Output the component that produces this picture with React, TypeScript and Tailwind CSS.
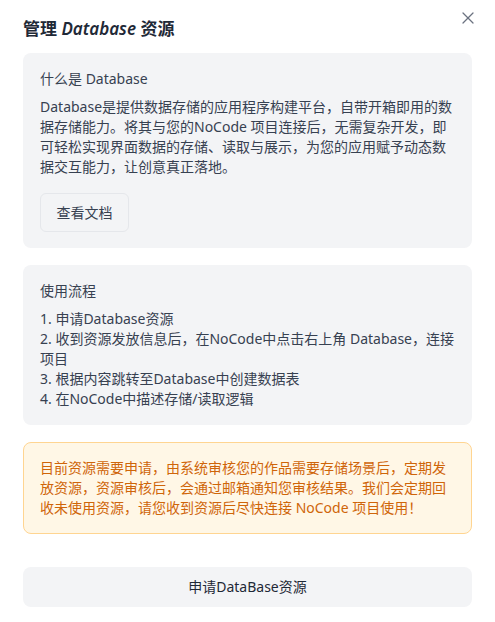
import { X } from 'lucide-react'

const steps = [
  '1. 申请Database资源',
  '2. 收到资源发放信息后，在NoCode中点击右上角 Database，连接项目',
  '3. 根据内容跳转至Database中创建数据表',
  '4. 在NoCode中描述存储/读取逻辑',
]

export default function App() {
  return (
    <div
      className="relative h-[622px] w-[495px] bg-white px-[23px] pt-[18px] text-[#374151]"
      style={{ fontFamily: '"Noto Sans", "Noto Sans CJK SC", sans-serif' }}
    >
      <button type="button" className="absolute right-[17px] top-[8px] text-[#6b7280]">
        <X size={20} strokeWidth={1.5} />
      </button>

      <h2 className="text-[17px] font-semibold leading-[22px] text-[#1f2937]">
        管理 <span className="italic">Database</span> 资源
      </h2>

      <section className="mt-[13px] rounded-lg bg-[#f3f4f6] py-4 pl-[17px] pr-[18px]">
        <div className="text-sm leading-5">什么是 Database</div>
        <p className="mt-2 text-sm leading-5">
          Database是提供数据存储的应用程序构建平台，自带开箱即用的数据存储能力。将其与您的NoCode 项目连接后，无需复杂开发，即可轻松实现界面数据的存储、读取与展示，为您的应用赋予动态数据交互能力，让创意真正落地。
        </p>
        <button
          type="button"
          className="mt-4 h-[39px] w-[89px] rounded-md border border-[#e5e7eb] bg-[#f3f4f6] text-sm text-[#374151]"
        >
          查看文档
        </button>
      </section>

      <section className="mt-[17px] rounded-lg bg-[#f3f4f6] py-4 pl-[17px] pr-[8px]">
        <div className="text-sm leading-5">使用流程</div>
        <ol className="mt-2 text-sm leading-5">
          {steps.map((s) => (
            <li key={s}>{s}</li>
          ))}
        </ol>
      </section>

      <div className="mt-[17px] rounded-lg border border-[#ffd591] bg-[#fff7e6] py-[15px] pl-[16px] pr-[17px] text-sm leading-5 text-[#cf6509]">
        目前资源需要申请，由系统审核您的作品需要存储场景后，定期发放资源，资源审核后，会通过邮箱通知您审核结果。我们会定期回收未使用资源，请您收到资源后尽快连接 NoCode 项目使用！
      </div>

      <button
        type="button"
        className="mt-[33px] flex h-10 w-full items-center justify-center rounded-lg bg-[#f3f4f6] text-sm text-[#1f2937]"
      >
        申请DataBase资源
      </button>
    </div>
  )
}
